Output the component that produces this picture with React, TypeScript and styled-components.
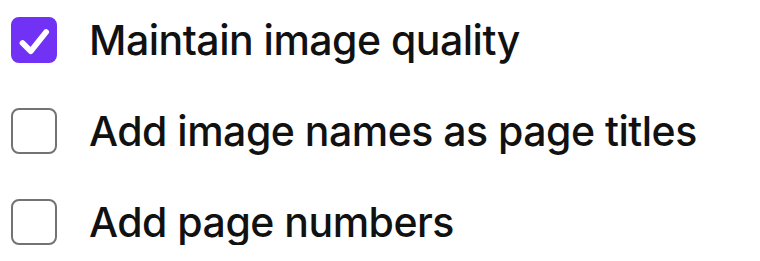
import React, { FC, useState } from 'react';
import styled, { createGlobalStyle } from 'styled-components';

const GlobalStyle = createGlobalStyle`
  body {
    margin: 0;
    background: #ffffff;
    font-family: Inter, "Noto Sans", sans-serif;
  }
`;

const List = styled.div`
  display: flex;
  flex-direction: column;
  gap: 45px;
  padding: 17px 0 0 11px;
`;

const Row = styled.label`
  display: flex;
  align-items: center;
  gap: 32px;
  cursor: pointer;
`;

const Box = styled.span<{ $checked: boolean }>`
  box-sizing: border-box;
  width: 46px;
  height: 46px;
  flex-shrink: 0;
  border-radius: 8px;
  border: 2.5px solid ${p => (p.$checked ? '#7132f5' : '#737373')};
  background: ${p => (p.$checked ? '#7132f5' : '#ffffff')};
  display: flex;
  align-items: center;
  justify-content: center;
`;

const Text = styled.span`
  font-size: 41px;
  font-weight: 500;
  color: #111111;
  letter-spacing: -0.5px;
  line-height: 1;
`;

const Check: FC = () => (
  <svg width="41" height="41" viewBox="0 0 24 24" fill="none">
    <path
      d="M5 13.5l4.8 4.8L18.8 7"
      stroke="#ffffff"
      strokeWidth="3.4"
      strokeLinecap="round"
      strokeLinejoin="round"
    />
  </svg>
);

const options = [
  'Maintain image quality',
  'Add image names as page titles',
  'Add page numbers'
];

const App: FC = () => {
  const [checked, setChecked] = useState([true, false, false]);

  const toggle = (index: number) =>
    setChecked(prev => prev.map((v, i) => (i === index ? !v : v)));

  return (
    <>
      <GlobalStyle />
      <List>
        {options.map((text, index) => (
          <Row key={text} onClick={() => toggle(index)}>
            <Box $checked={checked[index]}>{checked[index] && <Check />}</Box>
            <Text>{text}</Text>
          </Row>
        ))}
      </List>
    </>
  );
};

export default App;
